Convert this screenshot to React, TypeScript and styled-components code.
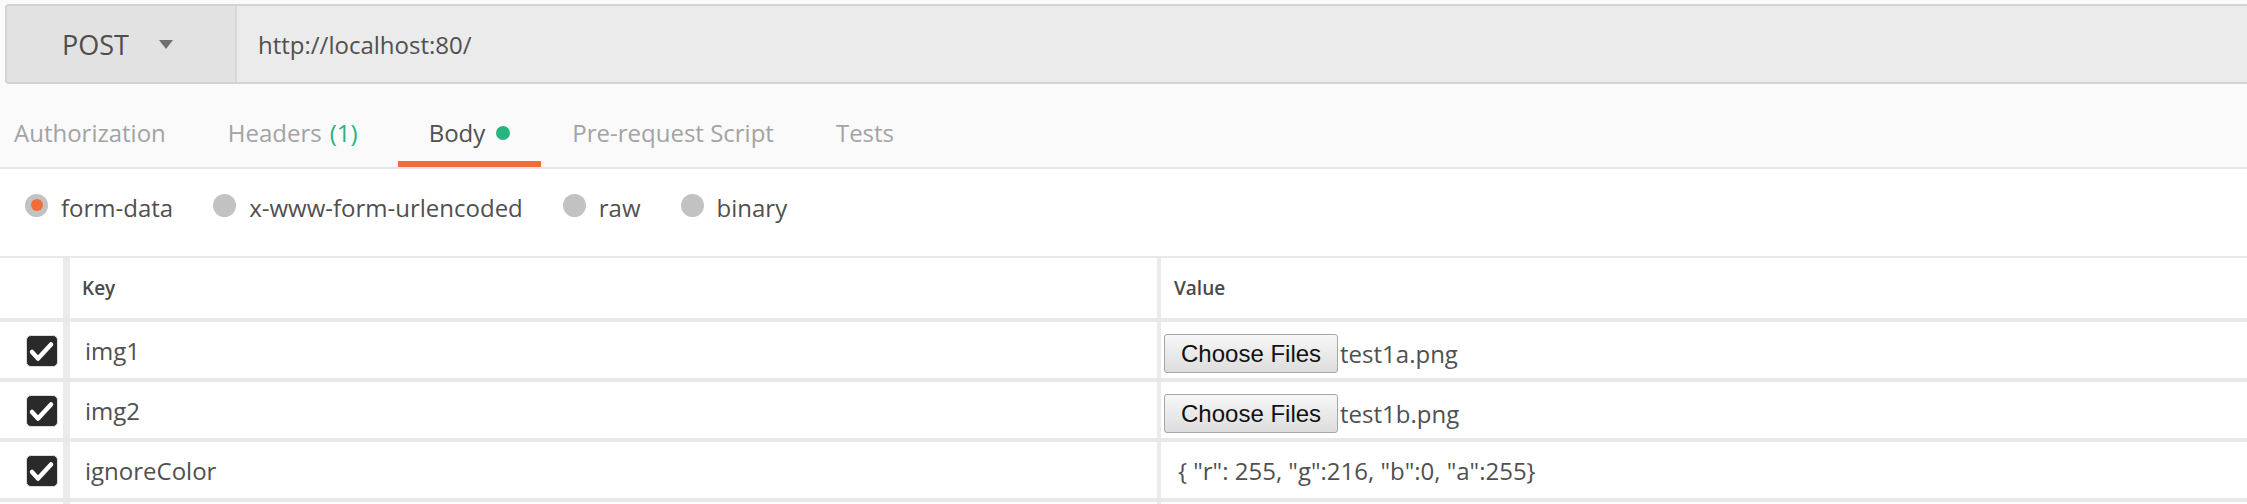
import React from "react";
import styled, { createGlobalStyle } from "styled-components";

const GlobalStyle = createGlobalStyle`
  html, body {
    margin: 0;
    padding: 0;
    overflow: hidden;
    background: #ffffff;
  }
  body {
    font-family: "Open Sans", "Liberation Sans", sans-serif;
    color: #505050;
  }
`;

const TopSection = styled.div`
  background: #fafafa;
  padding-top: 4px;
`;

const RequestBar = styled.div`
  display: flex;
  height: 80px;
  margin-left: 5px;
  box-sizing: border-box;
  border: 2px solid #d3d3d3;
  border-right: none;
  border-radius: 4px 0 0 4px;
  overflow: hidden;
`;

const MethodSelect = styled.div`
  display: flex;
  align-items: center;
  width: 230px;
  padding-left: 55px;
  box-sizing: border-box;
  background: #e2e2e2;
  border-right: 2px solid #d9d9d9;
  font-size: 27px;
  color: #4e4e4e;
`;

const Caret = styled.span`
  margin-left: 30px;
  width: 0;
  height: 0;
  border-left: 7.5px solid transparent;
  border-right: 7.5px solid transparent;
  border-top: 9px solid #707070;
`;

const UrlField = styled.div`
  flex: 1;
  display: flex;
  align-items: center;
  padding-left: 21px;
  background: #ebebeb;
  font-size: 24px;
  color: #505050;
`;

const TabBar = styled.div`
  display: flex;
  height: 85px;
  box-sizing: border-box;
  border-bottom: 2px solid #e6e6e6;
`;

const Tab = styled.div<{ $active?: boolean; $first?: boolean }>`
  display: flex;
  align-items: center;
  height: 100%;
  box-sizing: border-box;
  padding: 20px 31px 0 ${(p) => (p.$first ? "14px" : "31px")};
  border-bottom: 6px solid ${(p) => (p.$active ? "#f26b3a" : "transparent")};
  font-size: 24px;
  color: ${(p) => (p.$active ? "#505050" : "#a3a3a3")};
  white-space: nowrap;
`;

const Count = styled.span`
  margin: 0 9px 0 8px;
  color: #26b47f;
`;

const Dot = styled.span`
  width: 14px;
  height: 14px;
  margin-left: 11px;
  border-radius: 50%;
  background: #26b47f;
`;

const BodyTypes = styled.div`
  display: flex;
  align-items: flex-start;
  height: 87px;
  box-sizing: border-box;
  padding: 24px 0 0 25px;
  gap: 40px;
  background: #ffffff;
`;

const Option = styled.label`
  display: flex;
  align-items: center;
  height: 24px;
  font-size: 24px;
  color: #505050;
  white-space: nowrap;
`;

const OptionText = styled.span`
  margin-top: 5px;
`;

const Radio = styled.span<{ $checked?: boolean }>`
  display: flex;
  align-items: center;
  justify-content: center;
  width: 23px;
  height: 23px;
  margin-right: 13px;
  border-radius: 50%;
  background: #c2c2c2;

  &::after {
    content: "";
    display: ${(p) => (p.$checked ? "block" : "none")};
    width: 12px;
    height: 12px;
    border-radius: 50%;
    background: #f26b3a;
  }
`;

const Table = styled.div`
  border-top: 2px solid #e8e8e8;
`;

const Row = styled.div<{ $head?: boolean }>`
  display: grid;
  grid-template-columns: 63px 1094px 1fr;
  height: ${(p) => (p.$head ? "64px" : "60px")};
  box-sizing: border-box;
  border-bottom: 4px solid #e8e8e8;
`;

const CheckCell = styled.div`
  display: flex;
  align-items: center;
  padding-left: 26px;
`;

const Cell = styled.div<{ $divider: number; $inset: number; $head?: boolean }>`
  display: flex;
  align-items: center;
  padding-left: ${(p) => p.$inset}px;
  border-left: ${(p) => p.$divider}px solid #ebebeb;
  font-size: ${(p) => (p.$head ? "19px" : "24px")};
  font-weight: ${(p) => (p.$head ? 600 : 400)};
  color: ${(p) => (p.$head ? "#4a4a4a" : "#505050")};
  white-space: nowrap;
  overflow: hidden;
`;

const CheckBox = styled.span`
  display: flex;
  align-items: center;
  justify-content: center;
  width: 32px;
  height: 32px;
  box-sizing: border-box;
  border: 1px solid #dcdcdc;
  border-radius: 5px;
  background: #2a2a2a;
  margin-top: 2px;
`;

const FileButton = styled.button`
  height: 39px;
  margin-top: 7px;
  padding: 0 16px;
  border: 1px solid #a6a6a6;
  border-radius: 3px;
  background: linear-gradient(#f7f7f7, #dddddd);
  font-family: "Liberation Sans", Arial, sans-serif;
  font-size: 24px;
  color: #111111;
`;

const FileName = styled.span`
  margin: 7px 0 0 2px;
`;

const Check = () => (
  <svg width="30" height="30" viewBox="0 0 30 30">
    <polyline
      points="5,16 11,22.5 24,8.5"
      fill="none"
      stroke="#ffffff"
      strokeWidth="4.5"
      strokeLinecap="round"
      strokeLinejoin="round"
    />
  </svg>
);

type Param = { key: string; file?: string; text?: string };

const params: Param[] = [
  { key: "img1", file: "test1a.png" },
  { key: "img2", file: "test1b.png" },
  { key: "ignoreColor", text: '{ "r": 255, "g":216, "b":0, "a":255}' },
];

const tabs = ["Authorization", "Headers", "Body", "Pre-request Script", "Tests"];
const bodyTypes = ["form-data", "x-www-form-urlencoded", "raw", "binary"];

export default function App() {
  return (
    <>
      <GlobalStyle />
      <TopSection>
        <RequestBar>
          <MethodSelect>
            POST
            <Caret />
          </MethodSelect>
          <UrlField>http://localhost:80/</UrlField>
        </RequestBar>
        <TabBar>
          {tabs.map((t, i) => (
            <Tab key={t} $first={i === 0} $active={t === "Body"}>
              {t}
              {t === "Headers" && <Count>(1)</Count>}
              {t === "Body" && <Dot />}
            </Tab>
          ))}
        </TabBar>
      </TopSection>
      <BodyTypes>
        {bodyTypes.map((b, i) => (
          <Option key={b}>
            <Radio $checked={i === 0} />
            <OptionText>{b}</OptionText>
          </Option>
        ))}
      </BodyTypes>
      <Table>
        <Row $head>
          <CheckCell />
          <Cell $head $divider={7} $inset={12}>
            Key
          </Cell>
          <Cell $head $divider={4} $inset={13}>
            Value
          </Cell>
        </Row>
        {params.map((p) => (
          <Row key={p.key}>
            <CheckCell>
              <CheckBox>
                <Check />
              </CheckBox>
            </CheckCell>
            <Cell $divider={7} $inset={15}>
              {p.key}
            </Cell>
            {p.file ? (
              <Cell $divider={4} $inset={3}>
                <FileButton>Choose Files</FileButton>
                <FileName>{p.file}</FileName>
              </Cell>
            ) : (
              <Cell $divider={4} $inset={17}>
                {p.text}
              </Cell>
            )}
          </Row>
        ))}
        <Row>
          <CheckCell />
          <Cell $divider={7} $inset={15} />
          <Cell $divider={4} $inset={17} />
        </Row>
      </Table>
    </>
  );
}
